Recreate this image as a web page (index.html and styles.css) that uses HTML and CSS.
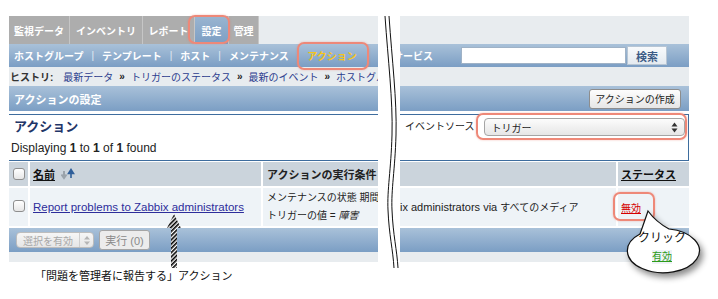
FILE: index.html
```html
<!DOCTYPE html>
<html lang="ja">
<head>
<meta charset="utf-8">
<title>アクションの設定</title>
<link rel="stylesheet" href="styles.css">
</head>
<body>
<div class="stage">
  <div class="panels">
    <div class="panel left">
      <div class="tabs">
        <div class="tab t1">監視データ</div>
        <div class="tab t2">インベントリ</div>
        <div class="tab t3">レポート</div>
        <div class="tab t4">設定</div>
        <div class="tab t5">管理</div>
      </div>
      <div class="nav">
        <span>ホストグループ</span><span class="sep">|</span>
        <span>テンプレート</span><span class="sep">|</span>
        <span>ホスト</span><span class="sep">|</span>
        <span>メンテナンス</span><span class="sep">|</span>
        <span class="cur">アクション</span>
      </div>
      <div class="hist">
        <b>ヒストリ:</b>
        <a>最新データ</a><span class="raq">»</span>
        <a>トリガーのステータス</a><span class="raq">»</span>
        <a>最新のイベント</a><span class="raq">»</span>
        <a>ホストグループ</a>
      </div>
      <div class="hdr">アクションの設定</div>
      <div class="sect">
        <div class="title">アクション</div>
        <div class="count">Displaying <b>1</b> to <b>1</b> of <b>1</b> found</div>
      </div>
      <div class="thead">
        <div class="c-chk"><span class="cb"></span></div>
        <div class="c-name">
          <span class="sorted">名前</span>
          <svg class="sort" width="14" height="12" viewBox="0 0 14 12">
            <path d="M3 3 V8 M0.5 6.5 L3 10 L5.5 6.5" fill="none" stroke="#9aa3ab" stroke-width="2"/>
            <path d="M10 10 V4 M7.5 5.5 L10 1.5 L12.5 5.5 Z" fill="#2f5f9a" stroke="#2f5f9a" stroke-width="1.6"/>
          </svg>
        </div>
        <div class="c-cond">アクションの実行条件</div>
      </div>
      <div class="trow">
        <div class="c-chk"><span class="cb"></span></div>
        <div class="c-name"><a class="alink">Report problems to Zabbix administrators</a></div>
        <div class="c-cond cond">
          <div>メンテナンスの状態 期間外</div>
          <div>トリガーの値 = <i>障害</i></div>
        </div>
      </div>
      <div class="foot">
        <div class="fsel"><span class="fsel-t">選択を有効</span><span class="fsel-a">
          <svg width="6" height="9" viewBox="0 0 6 9"><path d="M3 0 L6 3.5 H0 Z M3 9 L6 5.5 H0 Z" fill="#b5b5b5"/></svg></span></div>
        <div class="fbtn">実行 (0)</div>
      </div>
      <div class="strip"></div>
    </div>

    <div class="panel right">
      <div class="tabs"></div>
      <div class="nav rnav">
        <span class="svc">サービス</span>
        <span class="search"></span>
        <span class="sbtn">検索</span>
      </div>
      <div class="hist"></div>
      <div class="hdr"><span></span><span class="create">アクションの作成</span></div>
      <div class="sect rsect">
        <span class="src">イベントソース</span>
        <div class="sel"><span>トリガー</span>
          <svg width="7" height="11" viewBox="0 0 7 11"><path d="M3.5 0.5 L6.5 4.5 H0.5 Z M3.5 10.5 L6.5 6.5 H0.5 Z" fill="#333"/></svg>
        </div>
      </div>
      <div class="thead">
        <div class="c-ops"></div>
        <div class="c-stat"><span class="sorted">ステータス</span></div>
      </div>
      <div class="trow">
        <div class="c-ops ops">ix administrators via <span class="ja">すべてのメディア</span></div>
        <div class="c-stat"><a class="off">無効</a></div>
      </div>
      <div class="foot"></div>
      <div class="strip"></div>
    </div>
  </div>

  <div class="note">「問題を管理者に報告する」アクション</div>

  <svg class="brk" width="24" height="262" viewBox="0 0 24 262">
    <path d="M7,6 C10,50 15,90 14,125 C13,160 9,180 10,200 C11,225 15,240 16,258" fill="none" stroke="#111" stroke-width="1"/>
    <path d="M11,6 C14,50 19,90 18,125 C17,160 13,180 14,200 C15,225 19,240 20,258" fill="none" stroke="#111" stroke-width="1"/>
  </svg>

  <div class="hl hl1"></div>
  <div class="hl hl2"></div>
  <div class="hl hl3"></div>
  <div class="hl hl4"></div>

  <svg class="arrow" width="20" height="58" viewBox="0 0 20 58">
    <defs>
      <pattern id="hatch" width="3" height="3" patternUnits="userSpaceOnUse" patternTransform="rotate(45)">
        <rect width="1.6" height="3" fill="#000"/>
      </pattern>
    </defs>
    <path d="M10 2 L17 16 H13 V56 H7 V16 H3 Z" fill="#fff"/>
    <path d="M10 2 L17 16 H13 V56 H7 V16 H3 Z" fill="url(#hatch)"/>
  </svg>

  <div class="bubble">
    <svg class="bub-shape" width="92" height="78" viewBox="0 0 92 78">
      <path d="M20,29 Q25,15 28,6 Q36,17 49,24 A36,22 0 1 1 20,29 Z" fill="#fff" stroke="#111" stroke-width="1.2"/>
    </svg>
    <div class="bub-text">
      <div class="click">クリック</div>
      <div><a class="on">有効</a></div>
    </div>
  </div>
</div>
</body>
</html>
```

FILE: styles.css
```css
* { box-sizing: border-box; }

body {
  margin: 0;
  background: #fff;
  font-family: "Liberation Sans", "Noto Sans CJK JP", sans-serif;
  font-size: 11px;
  color: #222;
}

.stage {
  position: relative;
  width: 718px;
  height: 299px;
  overflow: hidden;
}

.panels {
  display: flex;
  gap: 22px;
  padding: 16px 0 0 9px;
}

.panel {
  display: flex;
  flex-direction: column;
  overflow: hidden;
}
.left { width: 369px; }
.right { width: 289px; }

/* top tabs */
.tabs {
  height: 28px;
  display: flex;
  background: #e8ecef;
}
.tab {
  height: 28px;
  background: #adadad;
  border-right: 1px solid #c6c6c6;
  color: #fff;
  font-weight: bold;
  font-size: 10px;
  display: flex;
  align-items: center;
  justify-content: center;
  white-space: nowrap;
}
.t1 { width: 61px; }
.t2 { width: 73px; }
.t3 { width: 52px; }
.t4 { width: 34px; background: linear-gradient(#9ab5d1, #7c9ec3); }
.t5 { width: 30px; }

/* blue nav */
.nav {
  height: 23px;
  display: flex;
  align-items: center;
  background: linear-gradient(#a9c1d9, #7b9ec4);
  color: #fff;
  font-weight: bold;
  font-size: 10px;
  padding-left: 5px;
  white-space: nowrap;
}
.sep { font-weight: normal; color: #e2eaf3; margin: 0 8px; }
.cur { color: #f6c51c; }

.rnav { padding-left: 0; }
.svc { margin-left: -7px; }
.search {
  width: 165px;
  height: 17px;
  margin-left: 28px;
  background: #fff;
  border: 1px solid #9fb2c6;
}
.sbtn {
  width: 40px;
  height: 19px;
  margin-left: 1px;
  display: flex;
  align-items: center;
  justify-content: center;
  background: linear-gradient(#f8fafc, #e4eaf0);
  border: 1px solid #b8c6d4;
  color: #3b5b86;
  font-size: 11px;
}

/* history */
.hist {
  height: 19px;
  display: flex;
  align-items: center;
  background: #e8ecef;
  font-size: 10px;
  padding-left: 1px;
  white-space: nowrap;
}
.hist b { color: #333; margin-right: 10px; }
.hist a { color: #2c3d8e; }
.raq { font-weight: bold; margin: 0 6px; color: #222; }

/* section header */
.hdr {
  height: 25px;
  display: flex;
  align-items: center;
  justify-content: space-between;
  background: linear-gradient(#a9c1d9, #7b9ec4);
  color: #fff;
  font-weight: bold;
  font-size: 11px;
  padding: 0 8px 0 5px;
  margin-bottom: 3px;
  white-space: nowrap;
}
.create {
  width: 92px;
  height: 20px;
  display: flex;
  align-items: center;
  justify-content: center;
  background: linear-gradient(#fdfdfd, #e6e6e6);
  border: 1px solid #8d8d8d;
  border-radius: 3px;
  color: #222;
  font-weight: normal;
  font-size: 10px;
}

/* filter section */
.sect {
  height: 47px;
  border-top: 1px solid #3e6d9e;
  border-bottom: 1px solid #3e6d9e;
  margin-bottom: 1px;
  background: #fff;
}
.title {
  font-size: 13px;
  font-weight: bold;
  color: #1f3668;
  line-height: 18px;
  margin-top: 3px;
  padding-left: 5px;
}
.count {
  line-height: 16px;
  margin-top: 4px;
  padding-left: 2px;
  font-size: 12px;
}
.rsect {
  border-right: 1px solid #3e6d9e;
  display: flex;
  align-items: flex-start;
  padding: 3px 0 0 5px;
}
.src { line-height: 18px; font-size: 10px; }
.sel {
  width: 201px;
  height: 18px;
  margin-left: 9px;
  border: 1px solid #a5a5a5;
  border-radius: 4px;
  background: linear-gradient(#fcfcfc, #e6e6e6);
  display: flex;
  align-items: center;
  justify-content: space-between;
  padding: 0 6px 0 7px;
  font-size: 10px;
  color: #222;
}

/* table */
.thead {
  height: 24px;
  display: flex;
  gap: 2px;
  margin-bottom: 2px;
}
.thead > div {
  background: #cbd4dc;
  display: flex;
  align-items: center;
}
.trow {
  height: 38px;
  display: flex;
  gap: 2px;
  margin-bottom: 2px;
}
.trow > div {
  background: #eef3f7;
  display: flex;
  align-items: center;
}
.c-chk { width: 19px; flex: none; justify-content: center; }
.trow .c-chk { padding-bottom: 3px; }
.c-name { width: 231px; flex: none; padding-left: 3px; }
.c-cond {
  flex: 1;
  min-width: 0;
  overflow: hidden;
  padding-left: 4px;
  font-weight: bold;
  white-space: nowrap;
}
.trow .cond {
  flex-direction: column;
  align-items: flex-start;
  justify-content: flex-start;
  padding-top: 1px;
  font-weight: normal;
  font-size: 10px;
  line-height: 18px;
}
.c-ops { flex: 1; min-width: 0; white-space: nowrap; overflow: hidden; }
.trow .ops { display: block; line-height: 38px; font-size: 11px; }
.c-stat { width: 71px; flex: none; padding-left: 3px; }

.sorted {
  font-weight: bold;
  text-decoration: underline;
  color: #111;
}
.sort { margin-left: 6px; }

.cb {
  width: 12px;
  height: 12px;
  border: 1px solid #8e8e8e;
  border-radius: 3px;
  background: linear-gradient(#fff, #e6e6e6);
}

.alink {
  color: #2d2d9b;
  text-decoration: underline;
  font-size: 11.5px;
}
.ja { font-size: 10px; }
.off { color: #d40000; text-decoration: underline; font-size: 10px; }

/* footer */
.foot {
  height: 24px;
  display: flex;
  align-items: center;
  gap: 5px;
  padding-left: 7px;
  background: linear-gradient(#a9c1d9, #7b9ec4);
}
.fsel {
  width: 78px;
  height: 16px;
  display: flex;
  align-items: center;
  border: 1px solid #bdbdbd;
  border-radius: 4px;
  background: linear-gradient(#f6f6f6, #e6e6e6);
  color: #a8a8a8;
  font-size: 10px;
}
.fsel-t { padding-left: 6px; width: 62px; }
.fsel-a {
  height: 100%;
  flex: 1;
  border-left: 1px solid #cfcfcf;
  display: flex;
  align-items: center;
  justify-content: center;
}
.fbtn {
  width: 51px;
  height: 20px;
  display: flex;
  align-items: center;
  justify-content: center;
  background: #ececec;
  border: 1px solid #a5a5a5;
  border-radius: 3px;
  color: #8a8a8a;
  font-size: 11px;
}
.strip { height: 10px; background: #e8ecef; }

/* annotation */
.note {
  margin-top: 6px;
  padding-left: 35px;
  font-size: 11px;
  line-height: 16px;
  color: #111;
}

/* overlays */
.brk { position: absolute; left: 378px; top: 10px; }

.hl {
  position: absolute;
  border: 2px solid #ee8878;
  border-radius: 7px;
  box-shadow: 0 0 2px rgba(238, 120, 100, 0.5);
}
.hl1 { left: 188px; top: 15px; width: 42px; height: 29px; }
.hl2 { left: 297px; top: 42px; width: 72px; height: 28px; }
.hl3 { left: 476px; top: 113px; width: 211px; height: 27px; }
.hl4 { left: 613px; top: 192px; width: 42px; height: 29px; }

.arrow { position: absolute; left: 164px; top: 212px; }

.bubble {
  position: absolute;
  left: 620px;
  top: 205px;
  width: 92px;
  height: 78px;
}
.bub-shape {
  position: absolute;
  left: 0;
  top: 0;
  filter: drop-shadow(3px 4px 3px rgba(0, 0, 0, 0.45));
}
.bub-text {
  position: absolute;
  left: 0;
  top: 25px;
  width: 84px;
  text-align: center;
}
.click { font-size: 12px; line-height: 16px; color: #111; }
.on {
  display: inline-block;
  margin-top: 4px;
  line-height: 14px;
  font-size: 10px;
  color: #2c9a1a;
  text-decoration: underline;
  background: #eef3f7;
}
```
